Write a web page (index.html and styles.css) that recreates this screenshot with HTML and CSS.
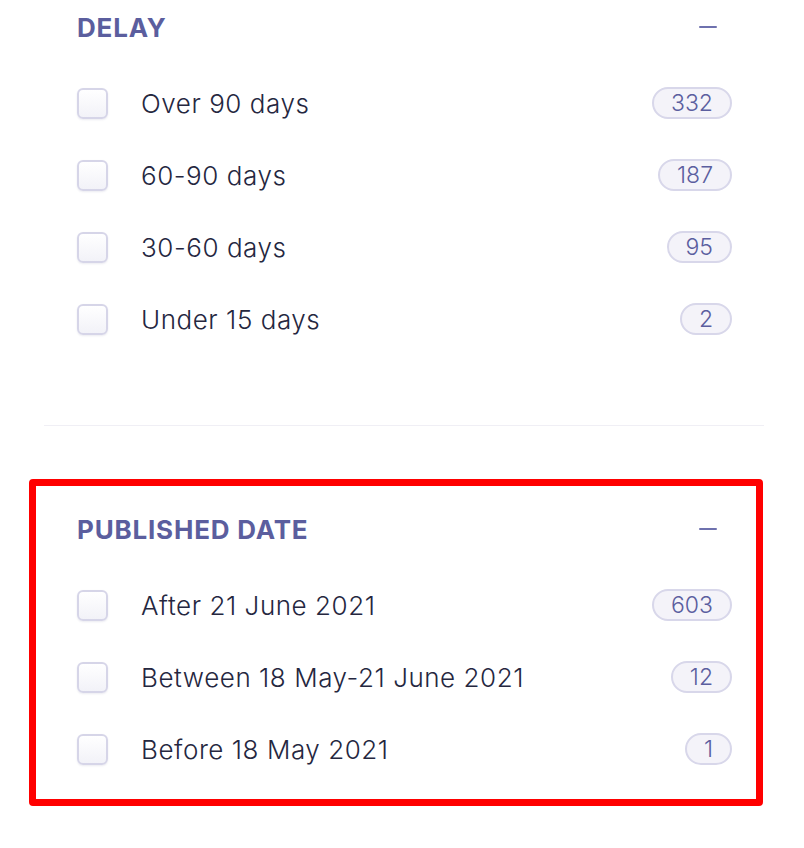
FILE: index.html
```html
<!DOCTYPE html>
<html>
<head>
<meta charset="utf-8">
<link rel="stylesheet" href="styles.css">
</head>
<body>
<div class="panel">
  <section class="filter first">
    <div class="filter-head">
      <h3 class="filter-title">DELAY</h3>
      <span class="collapse"></span>
    </div>
    <ul class="options">
      <li class="option"><span class="check"></span><span class="label">Over 90 days</span><span class="count">332</span></li>
      <li class="option"><span class="check"></span><span class="label">60-90 days</span><span class="count">187</span></li>
      <li class="option"><span class="check"></span><span class="label">30-60 days</span><span class="count">95</span></li>
      <li class="option"><span class="check"></span><span class="label">Under 15 days</span><span class="count">2</span></li>
    </ul>
  </section>
  <section class="filter second">
    <div class="highlight"></div>
    <div class="filter-head">
      <h3 class="filter-title">PUBLISHED DATE</h3>
      <span class="collapse"></span>
    </div>
    <ul class="options">
      <li class="option"><span class="check"></span><span class="label">After 21 June 2021</span><span class="count">603</span></li>
      <li class="option"><span class="check"></span><span class="label">Between 18 May-21 June 2021</span><span class="count">12</span></li>
      <li class="option"><span class="check"></span><span class="label">Before 18 May 2021</span><span class="count">1</span></li>
    </ul>
  </section>
</div>
</body>
</html>
```
FILE: styles.css
```css
* { box-sizing: border-box; }
html, body { margin: 0; padding: 0; background: #fff; }
body { font-family: Inter, "Noto Sans", sans-serif; width: 804px; height: 848px; overflow: hidden; }
.panel { padding: 0 40px 0 44px; }
.filter { position: relative; padding: 0 32px 70px 33px; }
.filter.first { border-bottom: 1px solid #f0eff5; }
.filter.second { padding-top: 76px; }
.filter-head { height: 54px; display: flex; align-items: center; justify-content: space-between; }
.filter-title { margin: 0; font-size: 26px; font-weight: 700; color: #5b5e9e; letter-spacing: 0.8px; }
.collapse { width: 18px; height: 2px; background: #6e71ae; margin-right: 15px; border-radius: 1px; }
.options { list-style: none; margin: 13px 0 0; padding: 0; }
.option { height: 72px; display: flex; align-items: center; }
.check { width: 31px; height: 31px; border: 2px solid #d6d5e8; border-radius: 6px; background: linear-gradient(#ffffff, #f2f2f8); box-shadow: 0 1px 2px rgba(90,90,140,0.12); flex: none; }
.label { flex: 1; margin-left: 33px; font-size: 26px; font-weight: 350; color: #25273f; letter-spacing: 0.55px; }
.count { height: 32px; padding: 0 17px; border: 2px solid #d8d7ea; border-radius: 16px; background: #f4f3f9; color: #5b5e9f; font-size: 23px; font-weight: 350; display: flex; align-items: center; line-height: 1; }
.highlight { position: absolute; left: -15px; top: 53px; width: 734px; height: 327px; border: 7px solid #ff0000; border-radius: 4px; pointer-events: none; }
```
